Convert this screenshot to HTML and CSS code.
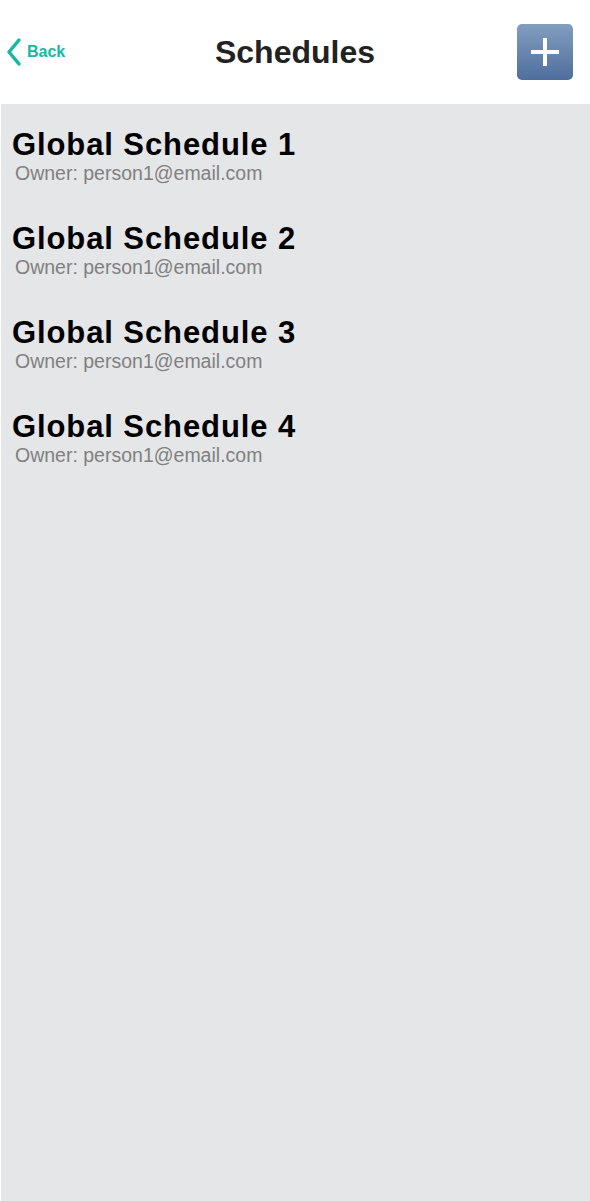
FILE: index.html
```html
<!DOCTYPE html>
<html lang="en">
<head>
    <meta charset="UTF-8">
    <meta name="viewport" content="width=device-width, initial-scale=1.0">
    <title>Schedules</title>
    <link rel="stylesheet" href="styles.css">
</head>
<body>
    <div class="header">
        <a class="back" href="#">
            <svg width="18" height="30" viewBox="0 0 18 30">
                <polyline points="14,3 4,15 14,27" fill="none" stroke="#16b8a6" stroke-width="3.5" stroke-linecap="round" stroke-linejoin="round"/>
            </svg>
            <span>Back</span>
        </a>
        <h1 class="title">Schedules</h1>
        <button class="add">
            <svg width="32" height="32" viewBox="0 0 32 32">
                <rect x="14" y="2" width="4" height="28" fill="#fff"/>
                <rect x="2" y="14" width="28" height="4" fill="#fff"/>
            </svg>
        </button>
    </div>
    <div class="content">
        <div class="item">
            <div class="item-title">Global Schedule 1</div>
            <div class="item-owner">Owner: person1@email.com</div>
        </div>
        <div class="item">
            <div class="item-title">Global Schedule 2</div>
            <div class="item-owner">Owner: person1@email.com</div>
        </div>
        <div class="item">
            <div class="item-title">Global Schedule 3</div>
            <div class="item-owner">Owner: person1@email.com</div>
        </div>
        <div class="item">
            <div class="item-title">Global Schedule 4</div>
            <div class="item-owner">Owner: person1@email.com</div>
        </div>
    </div>
</body>
</html>
```

FILE: styles.css
```css
body {
    margin: 0;
    font-family: "Liberation Sans", Arial, sans-serif;
    background: #fff;
    height: 1201px;
    display: flex;
    flex-direction: column;
}
.header {
    height: 104px;
    display: flex;
    align-items: center;
    justify-content: space-between;
    padding: 0 17px 0 5px;
    position: relative;
    flex-shrink: 0;
}
.back {
    display: flex;
    align-items: center;
    gap: 4px;
    color: #16b8a6;
    text-decoration: none;
    font-weight: bold;
    font-size: 16px;
}
.title {
    position: absolute;
    left: 0;
    right: 0;
    text-align: center;
    margin: 0;
    font-size: 32px;
    color: #222;
    pointer-events: none;
}
.add {
    width: 56px;
    height: 56px;
    border: none;
    border-radius: 5px;
    background: linear-gradient(#829ebf, #4f6e9d);
    display: flex;
    align-items: center;
    justify-content: center;
    padding: 0;
    cursor: pointer;
}
.content {
    flex: 1;
    background: #e5e6e8;
    margin-left: 1px;
    padding-top: 23px;
}
.item {
    padding: 0 11px;
    height: 94px;
}
.item-title {
    font-size: 31px;
    font-weight: bold;
    color: #000;
    line-height: 36px;
    letter-spacing: 0.9px;
}
.item-owner {
    font-size: 19.5px;
    color: #808080;
    padding-left: 3px;
    line-height: 20px;
}
```
